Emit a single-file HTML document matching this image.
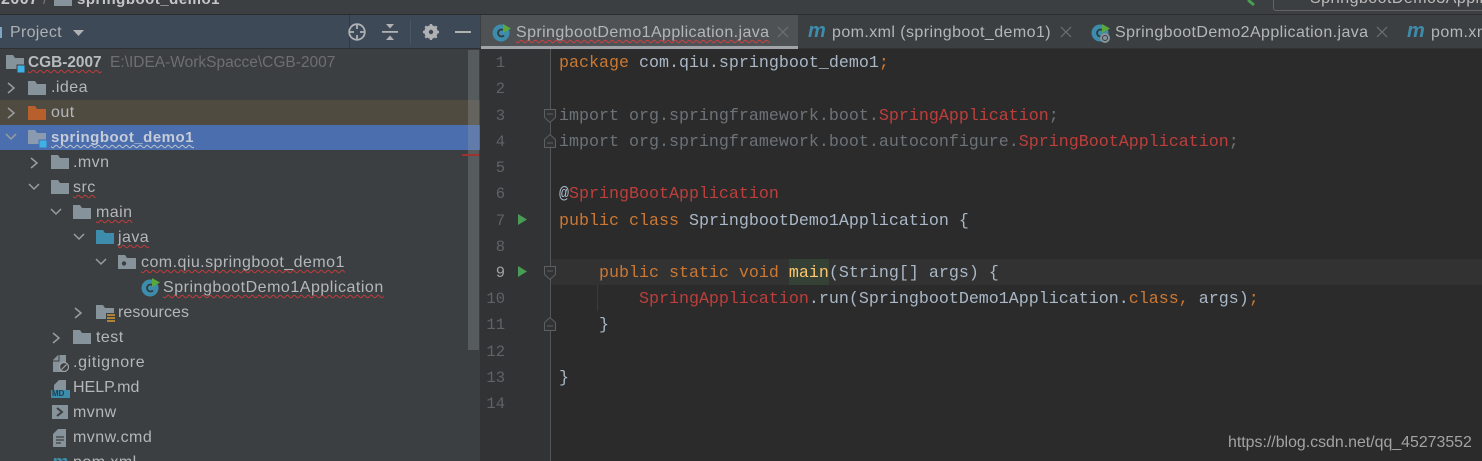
<!DOCTYPE html>
<html><head><meta charset="utf-8">
<style>
html,body{margin:0;padding:0;background:#3c3f41}
#r{position:relative;width:1482px;height:461px;overflow:hidden;background:#3c3f41;font-family:"Liberation Sans",sans-serif}
.a{position:absolute}
.t{position:absolute;white-space:nowrap;font-size:16px;letter-spacing:.45px;line-height:20px;color:#b4b7b9}
.w{text-decoration:underline wavy #c23b3b 1px;text-underline-offset:1.500px;text-decoration-skip-ink:none}
.c{position:absolute;left:559px;white-space:pre;font-family:"Liberation Mono",monospace;font-size:16.67px;line-height:26px;color:#a9b7c6}
.k{color:#cc7832}.r{color:#bc3f3c}.g{color:#6c7378}
.n{position:absolute;width:28px;left:477px;text-align:right;font-family:"Liberation Mono",monospace;font-size:15.5px;line-height:26px;color:#606366}
svg{position:absolute;overflow:visible}
</style></head><body><div id="r">
<!-- top bar -->
<div class="a" style="left:0;top:14px;width:1482px;height:1px;background:#2b2d2e"></div>
<div class="t" style="left:1px;top:-10px;font-weight:bold;color:#c4c6c8">2007</div>
<div class="t" style="left:43px;top:-10px;color:#777">/</div>
<svg style="left:54px;top:-6px" width="20" height="20"><path d="M0 0H10V6H18V12H0Z" fill="#87939a"/><rect x="11" y="0" width="8" height="5" fill="#3cb2e6"/></svg>
<div class="t" style="left:77px;top:-10px;font-weight:bold;font-size:15px;color:#c4c6c8;letter-spacing:.5px">springboot_demo1</div>
<svg style="left:1248px;top:0" width="12" height="8"><path d="M0 0L6 5" stroke="#499c54" stroke-width="3"/></svg>
<div class="a" style="left:1273px;top:-10px;width:220px;height:19px;border:1px solid #646464;border-radius:3px"></div>
<div class="t" style="left:1310px;top:-11px;color:#bbb">SpringbootDemo3Application</div>

<!-- project header -->
<div class="a" style="left:0;top:15px;width:480px;height:33px;background:#3d4956"></div>
<div class="a" style="left:349px;top:15px;width:1px;height:33px;background:#313a44"></div>
<div class="a" style="left:0;top:48px;width:480px;height:1px;background:#2e3032"></div>
<div class="a" style="left:0;top:27px;width:2px;height:11px;background:#7fa6c0"></div>
<div class="t" style="left:10px;top:23px;font-size:16px;letter-spacing:.3px;color:#adb1b4">Project</div>
<svg style="left:73px;top:30px" width="11" height="7"><path d="M0 0H11L5.500 6Z" fill="#afb1b3"/></svg>
<svg style="left:348px;top:23px" width="18" height="18" fill="none" stroke="#afb1b3" stroke-width="1.800"><circle cx="9" cy="9" r="7.800"/><path d="M9 1V6M9 12V17M1 9H6M12 9H17"/></svg>
<svg style="left:382px;top:24px" width="16" height="16" fill="#afb1b3"><rect x="0" y="7" width="16" height="1.800"/><path d="M4 0H12L8 4.500ZM4 16H12L8 11.500Z"/></svg>
<div class="a" style="left:410px;top:20px;width:1px;height:24px;background:#4d5660"></div>
<svg style="left:423px;top:24px" width="16" height="16"><circle cx="8" cy="8" r="5" fill="none" stroke="#afb1b3" stroke-width="3.400"/><path d="M8 0V16M0 8H16M2.300 2.300L13.700 13.700M13.700 2.300L2.300 13.700" stroke="#afb1b3" stroke-width="2.400"/><circle cx="8" cy="8" r="2.200" fill="#3d4956"/></svg>
<div class="a" style="left:455px;top:31px;width:16px;height:2px;background:#afb1b3"></div>

<!-- tree rows -->
<div class="a" style="left:0;top:100px;width:480px;height:25px;background:#4f4b41"></div>
<div class="a" style="left:0;top:125px;width:480px;height:25px;background:#4b6eaf"></div>

<svg width="0" height="0" style="left:0;top:0"><defs>
<path id="f" d="M0 0H7L9 3H18V14H0Z"/>
<path id="cr" d="M0 0L6 5L0 10" fill="none" stroke="#9a9d9f" stroke-width="1.500"/>
<path id="dn" d="M0 0L5 5L10 0" fill="none" stroke="#9a9d9f" stroke-width="1.500"/>
</defs></svg>

<!-- root -->
<svg style="left:6px;top:55px" width="20" height="18"><use href="#f" fill="#87939a"/><rect x="11" y="10" width="8" height="8" fill="#3cb2e6" stroke="#3c3f41"/></svg>
<div class="t w" style="left:28px;top:53px;font-weight:bold;font-size:15.400px;letter-spacing:0;color:#b9bcbe">CGB-2007</div>
<div class="t" style="left:110px;top:53px;font-size:15.500px;letter-spacing:0;color:#6d6f70">E:\IDEA-WorkSpacce\CGB-2007</div>
<!-- .idea -->
<svg style="left:8px;top:83px" width="10" height="10"><use href="#cr"/></svg>
<svg style="left:28px;top:81px" width="18" height="14"><use href="#f" fill="#87939a"/></svg>
<div class="t" style="left:51px;top:78px">.idea</div>
<!-- out -->
<svg style="left:8px;top:108px" width="10" height="10"><use href="#cr"/></svg>
<svg style="left:28px;top:106px" width="18" height="14"><use href="#f" fill="#b85f2e"/></svg>
<div class="t" style="left:51px;top:103px">out</div>
<!-- springboot_demo1 -->
<svg style="left:6px;top:134px" width="10" height="6"><use href="#dn" stroke="#c0c4cc"/></svg>
<svg style="left:28px;top:130px" width="20" height="18"><use href="#f" fill="#8a9bb0"/><rect x="11" y="10" width="8" height="8" fill="#3cb2e6" stroke="#4b6eaf"/></svg>
<div class="t w" style="left:51px;top:128px;font-weight:bold;font-size:15px;letter-spacing:.5px;color:#c6ccd6;text-decoration-color:#bfc4cc">springboot_demo1</div>
<!-- .mvn -->
<svg style="left:31px;top:158px" width="10" height="10"><use href="#cr"/></svg>
<svg style="left:51px;top:155px" width="18" height="14"><use href="#f" fill="#87939a"/></svg>
<div class="t" style="left:73px;top:153px">.mvn</div>
<!-- src -->
<svg style="left:29px;top:184px" width="10" height="6"><use href="#dn"/></svg>
<svg style="left:51px;top:180px" width="18" height="14"><use href="#f" fill="#87939a"/></svg>
<div class="t w" style="left:73px;top:178px">src</div>
<!-- main -->
<svg style="left:51px;top:209px" width="10" height="6"><use href="#dn"/></svg>
<svg style="left:73px;top:205px" width="18" height="14"><use href="#f" fill="#87939a"/></svg>
<div class="t w" style="left:96px;top:203px">main</div>
<!-- java -->
<svg style="left:74px;top:234px" width="10" height="6"><use href="#dn"/></svg>
<svg style="left:96px;top:230px" width="18" height="14"><use href="#f" fill="#3d8cab"/></svg>
<div class="t w" style="left:118px;top:228px">java</div>
<!-- package -->
<svg style="left:96px;top:259px" width="10" height="6"><use href="#dn"/></svg>
<svg style="left:118px;top:255px" width="18" height="14"><use href="#f" fill="#87939a"/><circle cx="6" cy="8.500" r="2.200" fill="#3c3f41"/></svg>
<div class="t w" style="left:141px;top:253px">com.qiu.springboot_demo1</div>
<!-- class -->
<svg style="left:141px;top:278px" width="20" height="18"><circle cx="9" cy="10" r="8.500" fill="#3d8cab"/><path d="M12 7.500A3.500 3.500 0 1 0 12 12.500" fill="none" stroke="#2f3b42" stroke-width="1.800"/><path d="M11 0L19 4.500L11 9Z" fill="#59a83c"/></svg>
<div class="t w" style="left:163px;top:278px;letter-spacing:.52px">SpringbootDemo1Application</div>
<!-- resources -->
<svg style="left:75px;top:308px" width="10" height="10"><use href="#cr"/></svg>
<svg style="left:96px;top:305px" width="20" height="18"><use href="#f" fill="#87939a"/><rect x="10" y="8" width="9" height="10" fill="#3c3f41"/><path d="M11 10H19M11 13H19M11 16H19" stroke="#d49a35" stroke-width="1.500"/></svg>
<div class="t" style="left:118px;top:303px;letter-spacing:.1px">resources</div>
<!-- test -->
<svg style="left:53px;top:333px" width="10" height="10"><use href="#cr"/></svg>
<svg style="left:73px;top:330px" width="18" height="14"><use href="#f" fill="#87939a"/></svg>
<div class="t" style="left:96px;top:328px">test</div>
<!-- .gitignore -->
<svg style="left:53px;top:354px" width="17" height="18"><path d="M0 6L5 1H13V18H0Z" fill="#87939a"/><path d="M6 1V7H0" fill="none" stroke="#3c3f41"/><circle cx="11" cy="13" r="4.500" fill="#3c3f41" stroke="#9ea2a5" stroke-width="1.200"/><path d="M8.500 15.500L13.500 10.500" stroke="#9ea2a5" stroke-width="1.200"/></svg>
<div class="t" style="left:73px;top:353px;letter-spacing:.65px">.gitignore</div>
<!-- HELP -->
<svg style="left:51px;top:380px" width="19" height="18"><path d="M3 5L8 0H15V10H3Z" fill="#87939a"/><rect x="0" y="10" width="19" height="8" fill="#3d8cab"/></svg>
<div class="a" style="left:52px;top:390px;font:bold 8px/8px 'Liberation Sans',sans-serif;color:#1f3f4f">MD</div>
<div class="t" style="left:73px;top:378px;letter-spacing:0">HELP.md</div>
<!-- mvnw -->
<svg style="left:52px;top:405px" width="16" height="14"><rect width="16" height="14" fill="#87939a"/><path d="M5 3L10 7L5 11" fill="none" stroke="#3c3f41" stroke-width="2"/></svg>
<div class="t" style="left:73px;top:403px">mvnw</div>
<!-- mvnw.cmd -->
<svg style="left:53px;top:429px" width="14" height="18"><path d="M0 5L5 0H13V18H0Z" fill="#87939a"/><path d="M3 8H11M3 11H11M3 14H8" stroke="#3c3f41" stroke-width="1.200"/></svg>
<div class="t" style="left:73px;top:428px">mvnw.cmd</div>
<!-- pom -->
<div class="a" style="left:52px;top:455px;font:italic bold 18px/14px 'Liberation Sans',sans-serif;color:#3d8cab">m</div>
<div class="t" style="left:73px;top:453px">pom.xml</div>

<!-- scrollbar -->
<div class="a" style="left:468px;top:50px;width:11px;height:300px;background:rgba(150,155,160,.3)"></div>
<div class="a" style="left:462px;top:154px;width:17px;height:2px;background:#9c3232"></div>

<!-- tabs -->
<div class="a" style="left:480px;top:15px;width:1002px;height:33px;background:#3c3f41"></div>
<div class="a" style="left:480px;top:48px;width:1002px;height:1px;background:#323232"></div>
<div class="a" style="left:481px;top:15px;width:317px;height:31px;background:#4e5254"></div>
<div class="a" style="left:481px;top:46px;width:317px;height:3px;background:#a0a4a8"></div>
<svg style="left:492px;top:23px" width="20" height="20"><circle cx="9" cy="10" r="8.500" fill="#3d8cab"/><path d="M12 7.500A3.500 3.500 0 1 0 12 12.500" fill="none" stroke="#2f3b42" stroke-width="1.800"/><path d="M11 1L19 5.500L11 10Z" fill="#59a83c"/></svg>
<div class="t w" style="left:516px;top:23px;letter-spacing:.4px;color:#b4b7b9;text-decoration-color:#d04040">SpringbootDemo1Application.java</div>
<svg style="left:778px;top:27px" width="10" height="10"><path d="M0 0L10 10M10 0L0 10" stroke="#6e7173" stroke-width="1.200"/></svg>
<div class="a" style="left:808px;top:21px;font:italic bold 20px/20px 'Liberation Sans',sans-serif;color:#3d8cab">m</div>
<div class="t" style="left:832px;top:23px;letter-spacing:.42px">pom.xml (springboot_demo1)</div>
<svg style="left:1061px;top:27px" width="10" height="10"><path d="M0 0L10 10M10 0L0 10" stroke="#6e7173" stroke-width="1.200"/></svg>
<svg style="left:1091px;top:23px" width="20" height="21"><circle cx="9" cy="10" r="8.500" fill="#3d8cab"/><path d="M12 7.500A3.500 3.500 0 1 0 12 12.500" fill="none" stroke="#2f3b42" stroke-width="1.800"/><path d="M11 1L19 5.500L11 10Z" fill="#59a83c"/><circle cx="14" cy="15" r="5" fill="#87939a"/><circle cx="14" cy="15" r="2.500" fill="none" stroke="#3c3f41"/></svg>
<div class="t" style="left:1115px;top:23px;letter-spacing:.4px">SpringbootDemo2Application.java</div>
<svg style="left:1377px;top:27px" width="10" height="10"><path d="M0 0L10 10M10 0L0 10" stroke="#6e7173" stroke-width="1.200"/></svg>
<div class="a" style="left:1407px;top:21px;font:italic bold 20px/20px 'Liberation Sans',sans-serif;color:#3d8cab">m</div>
<div class="t" style="left:1431px;top:23px">pom.xml</div>

<!-- editor -->
<div class="a" style="left:480px;top:49px;width:1002px;height:412px;background:#2b2b2b"></div>
<div class="a" style="left:480px;top:49px;width:70px;height:412px;background:#313335"></div>
<div class="a" style="left:550px;top:49px;width:1px;height:412px;background:#555"></div>
<div class="a" style="left:551px;top:259px;width:931px;height:26px;background:#323232"></div>
<div class="a" style="left:789px;top:259px;width:40px;height:26px;background:#344134"></div>
<div class="a" style="left:597px;top:285px;width:1px;height:26px;background:#3b3b3b"></div>

<div class="n" style="top:50px">1</div>
<div class="n" style="top:76px">2</div>
<div class="n" style="top:103px">3</div>
<div class="n" style="top:129px">4</div>
<div class="n" style="top:155px">5</div>
<div class="n" style="top:181px">6</div>
<div class="n" style="top:208px">7</div>
<div class="n" style="top:234px">8</div>
<div class="n" style="top:260px;color:#a4a3a3">9</div>
<div class="n" style="top:286px">10</div>
<div class="n" style="top:312px">11</div>
<div class="n" style="top:339px">12</div>
<div class="n" style="top:365px">13</div>
<div class="n" style="top:391px">14</div>

<svg style="left:518px;top:214px" width="10" height="11"><path d="M0 0L9 5.500L0 11Z" fill="#499c54"/></svg>
<svg style="left:518px;top:266px" width="10" height="11"><path d="M0 0L9 5.500L0 11Z" fill="#499c54"/></svg>

<svg style="left:544px;top:109px" width="12" height="14" fill="#313335" stroke="#5d5f60"><path d="M.5 .5H11.500V8.500L6 13.500L.5 8.500Z"/><path d="M3 5H9"/></svg>
<svg style="left:544px;top:134px" width="12" height="14" fill="#313335" stroke="#5d5f60"><path d="M.5 13.500H11.500V5.500L6 .5L.5 5.500Z"/><path d="M3 9H9"/></svg>
<svg style="left:544px;top:266px" width="12" height="14" fill="#313335" stroke="#5d5f60"><path d="M.5 .5H11.500V8.500L6 13.500L.5 8.500Z"/><path d="M3 5H9"/></svg>
<svg style="left:544px;top:317px" width="12" height="14" fill="#313335" stroke="#5d5f60"><path d="M.5 13.500H11.500V5.500L6 .5L.5 5.500Z"/><path d="M3 9H9"/></svg>

<div class="c" style="top:51px"><span class="k">package</span> com.qiu.springboot_demo1<span class="k">;</span></div>
<div class="c" style="top:104px"><span class="g">import org.springframework.boot.</span><span class="r">SpringApplication</span><span class="g">;</span></div>
<div class="c" style="top:130px"><span class="g">import org.springframework.boot.autoconfigure.</span><span class="r">SpringBootApplication</span><span class="g">;</span></div>
<div class="c" style="top:182px">@<span class="r">SpringBootApplication</span></div>
<div class="c" style="top:209px"><span class="k">public class</span> SpringbootDemo1Application {</div>
<div class="c" style="top:261px">    <span class="k">public static void</span> <span style="color:#ffc66d">main</span>(String[] args) {</div>
<div class="c" style="top:287px">        <span class="r">SpringApplication</span>.run(SpringbootDemo1Application.<span class="k">class</span><span class="k">,</span> args)<span class="k">;</span></div>
<div class="c" style="top:313px">    }</div>
<div class="c" style="top:366px">}</div>

<div class="a" style="left:1228px;top:433px;white-space:nowrap;font-size:15.900px;line-height:20px;color:#a3a3a3">https://blog.csdn.net/qq_45273552</div>
</div></body></html>
